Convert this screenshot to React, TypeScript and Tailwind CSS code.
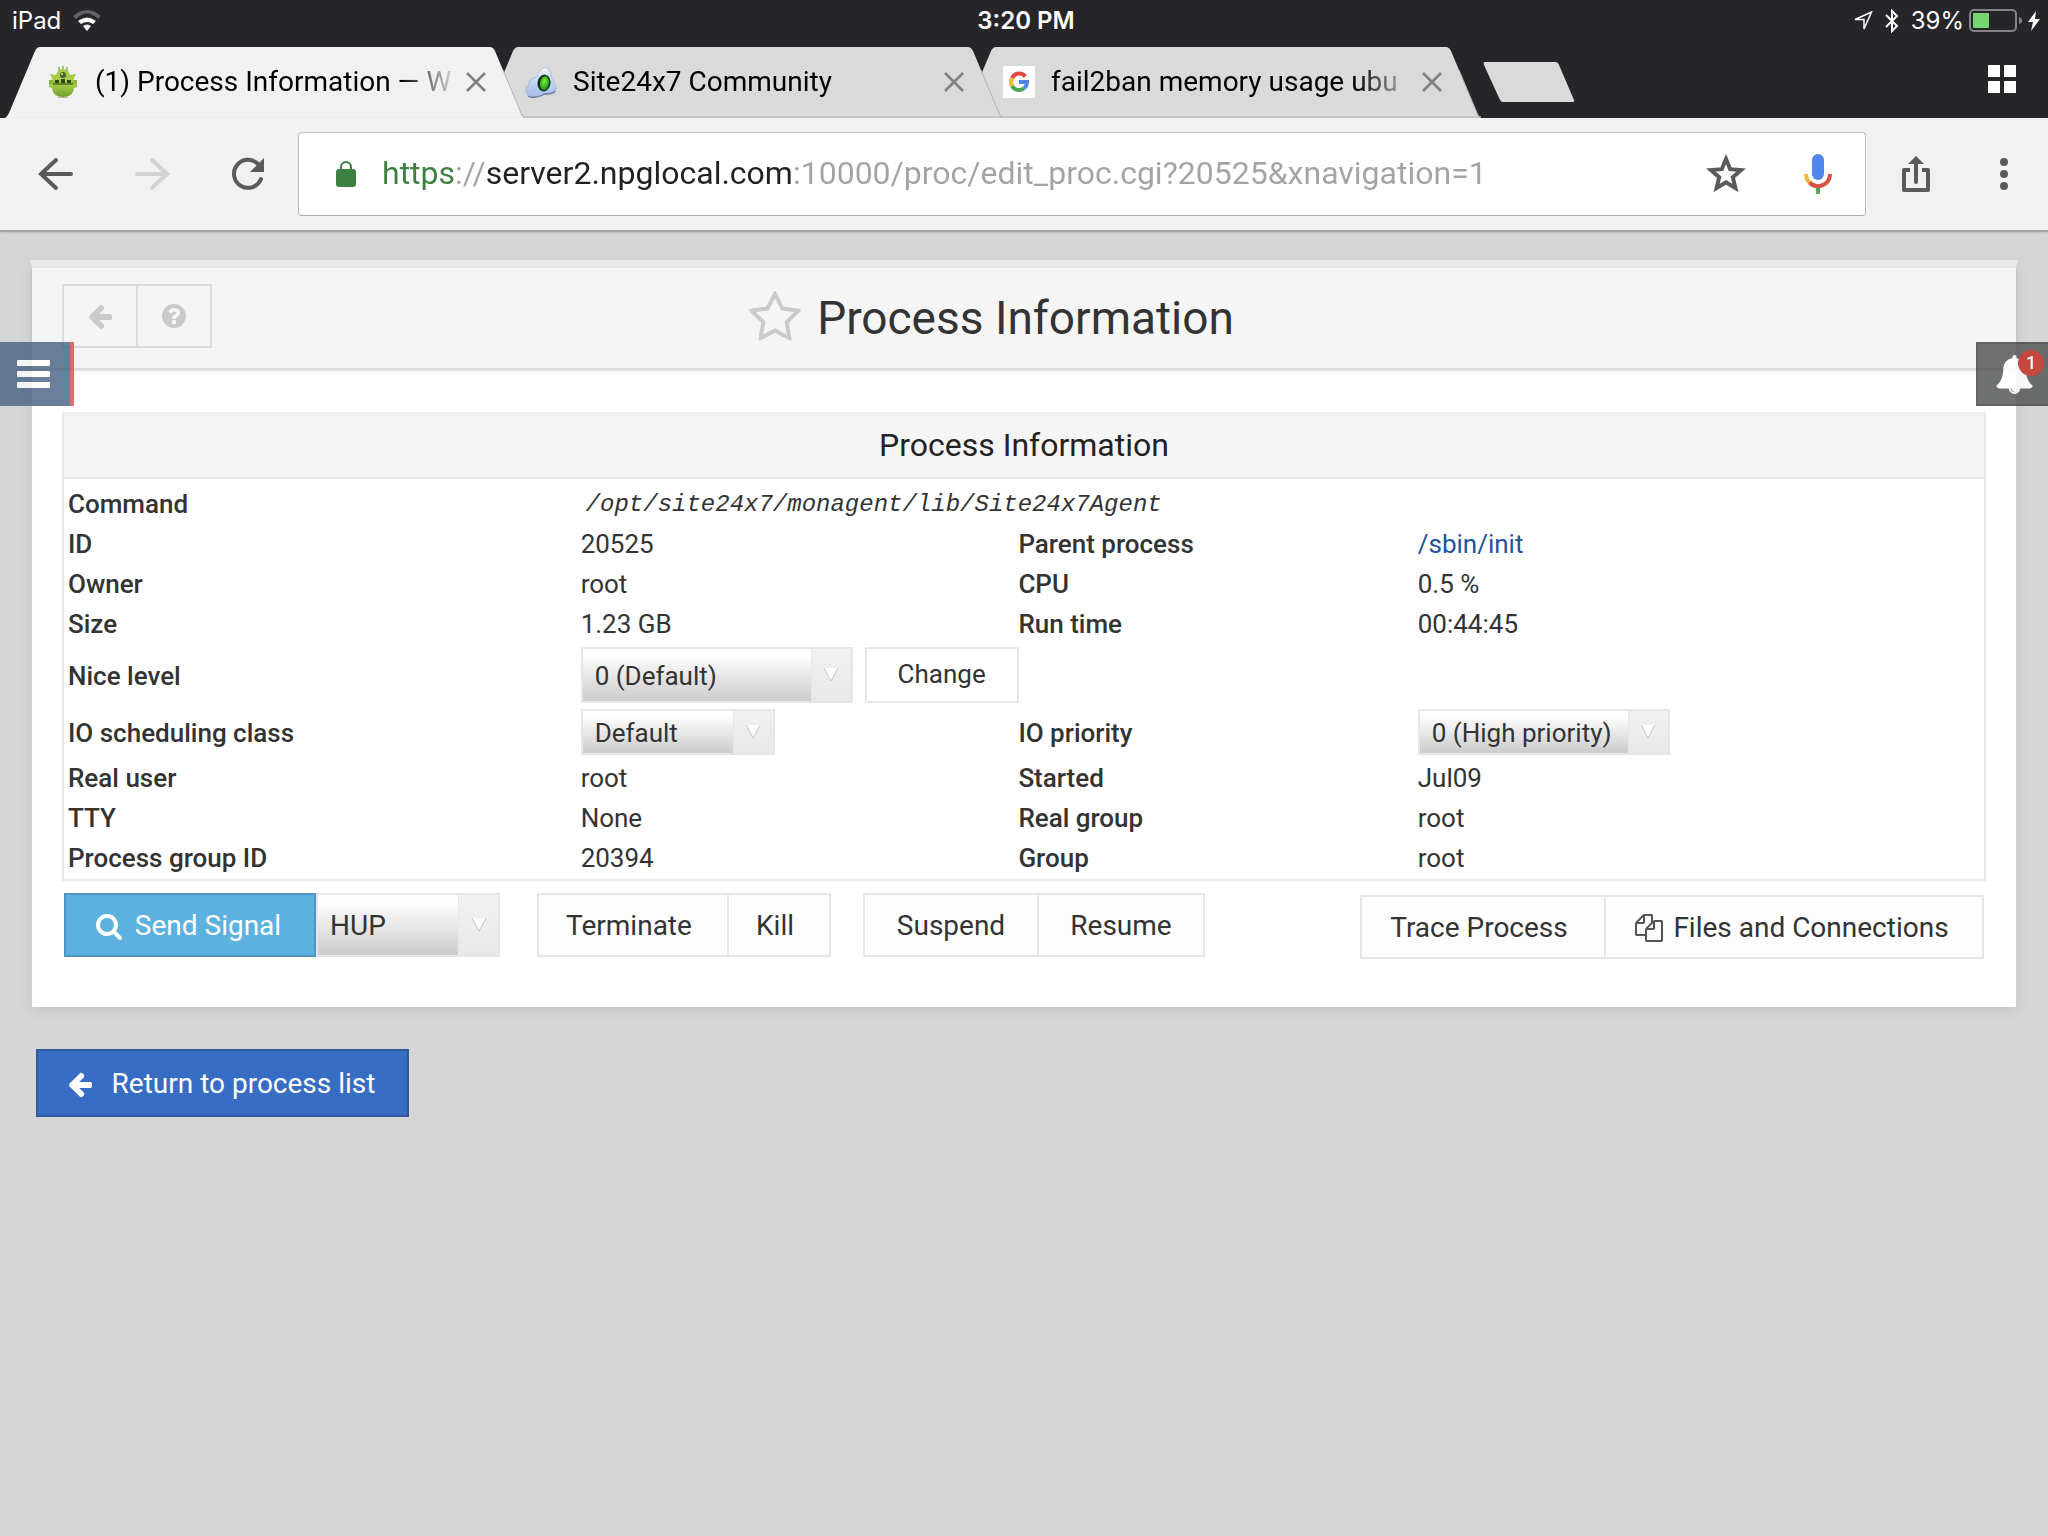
import { useState } from "react";

const paths = {
  arrowLeft:
    "M1664 896v128q0 53-32.5 90.5t-84.5 37.5h-704l293 294q38 36 38 90t-38 90l-75 76q-37 37-90 37-52 0-91-37l-651-652q-37-37-37-90 0-52 37-91l651-650q38-38 91-38 52 0 90 38l75 74q38 38 38 91t-38 91l-293 293h704q52 0 84.5 37.5t32.5 90.5z",
  question:
    "M1024 1376v-192q0-14-9-23t-23-9h-192q-14 0-23 9t-9 23v192q0 14 9 23t23 9h192q14 0 23-9t9-23zm256-672q0-88-55.5-163t-138.5-116-170-41q-243 0-371 213-15 24 8 42l132 100q7 6 19 6 16 0 25-12 53-68 86-92 34-24 86-24 48 0 85.5 26t37.5 59q0 38-20 61t-68 45q-63 28-115.5 86.5t-52.5 125.5v36q0 14 9 23t23 9h192q14 0 23-9t9-23q0-19 21.5-49.5t54.5-49.5q32-18 49-28.5t46-35 44.5-48 28-60.5 12.5-81zm384 192q0 209-103 385.5t-279.5 279.5-385.5 103-385.5-103-279.5-279.5-103-385.5 103-385.5 279.5-279.5 385.5-103 385.5 103 279.5 279.5 103 385.5z",
  star: "M1201 1004l306-297-422-62-189-382-189 382-422 62 306 297-73 421 378-199 377 199zm527-357q0 22-26 48l-363 354 86 500q1 7 1 20 0 50-41 50-19 0-40-12l-449-236-449 236q-22 12-40 12-21 0-31.5-14.5t-10.5-35.5q0-6 2-20l86-500-364-354q-25-27-25-48 0-37 56-46l502-73 225-455q19-41 49-41t49 41l225 455 502 73q56 9 56 46z",
  search:
    "M1216 832q0-185-131.5-316.5t-316.5-131.5-316.5 131.5-131.5 316.5 131.5 316.5 316.5 131.5 316.5-131.5 131.5-316.5zm512 832q0 52-38 90t-90 38q-54 0-90-38l-343-342q-179 124-399 124-143 0-273.5-55.5t-225-150-150-225-55.5-273.5 55.5-273.5 150-225 225-150 273.5-55.5 273.5 55.5 225 150 150 225 55.5 273.5q0 220-124 399l343 343q37 37 37 90z",
  files:
    "M1696 384q40 0 68 28t28 68v1216q0 40-28 68t-68 28h-960q-40 0-68-28t-28-68v-288h-544q-40 0-68-28t-28-68v-672q0-40 20-88t48-76l408-408q28-28 76-48t88-20h416q40 0 68 28t28 68v328q68-40 128-40h416zm-544 213l-299 299h299v-299zm-640-384l-299 299h299v-299zm196 647l316-316v-416h-384v416q0 40-28 68t-68 28h-416v640h512v-256q0-40 20-88t48-76zm956 804v-1152h-384v416q0 40-28 68t-68 28h-416v640h896z",
  bell: "M912 1696q0-16-16-16-59 0-101.5-42.5t-42.5-101.5q0-16-16-16t-16 16q0 73 51.5 124.5t124.5 51.5q16 0 16-16zm816-288q0 52-38 90t-90 38h-448q0 106-75 181t-181 75-181-75-75-181h-448q-52 0-90-38t-38-90q50-42 91-88t85-119.5 74.5-158.5 50-206 19.5-260q0-152 117-282.5t307-158.5q-8-19-8-39 0-40 28-68t68-28 68 28 28 68q0 20-8 39 190 28 307 158.5t117 282.5q0 139 19.5 260t50 206 74.5 158.5 85 119.5 91 88z",
};

function Icon({ name, className }: { name: keyof typeof paths; className: string }) {
  return (
    <svg viewBox="0 0 1792 1792" fill="currentColor" className={className} aria-hidden="true">
      <path d={paths[name]} />
    </svg>
  );
}

function WebminIcon() {
  return (
    <svg viewBox="0 0 32 32" className="h-8 w-8 shrink-0" aria-hidden="true">
      <defs>
        <linearGradient id="bowl" x1="0" y1="0" x2="0" y2="1">
          <stop offset="0" stopColor="#a6cf4c" />
          <stop offset="1" stopColor="#6f9e2a" />
        </linearGradient>
      </defs>
      <path d="M12 1v5M20 1v5M16 0v5" stroke="#a9c178" strokeWidth="2" />
      <path d="M3 8l6 1q2-6 7-6t7 6l6-1-3 6H6z" fill="#a3cb45" />
      <path d="M2 14h28v4H2z" fill="#8db53c" />
      <path d="M5 12h22l-2 5H7z" fill="#a3cb45" />
      <path d="M2 18h28v3l-3 1q-1 9-11 9T5 22l-3-1z" fill="url(#bowl)" />
      <path d="M6 17h20v2H6z" fill="#5f8327" />
      <circle cx="16" cy="9" r="3" fill="#4e6325" />
      <circle cx="15" cy="8" r="1" fill="#dbe8b8" />
      <path d="M8 14h4v3H8zM14 13h4v4h-4zM20 14h4v3h-4z" fill="#33451b" />
      <path d="M11 31h10v1H11z" fill="#b5bda6" />
    </svg>
  );
}

function CloudIcon() {
  return (
    <svg viewBox="0 0 32 32" className="h-8 w-8 shrink-0" aria-hidden="true">
      <defs>
        <linearGradient id="cloud" x1="0" y1="0" x2="0" y2="1">
          <stop offset="0" stopColor="#f4f8ff" />
          <stop offset=".5" stopColor="#c3d4f2" />
          <stop offset="1" stopColor="#a3bbe4" />
        </linearGradient>
        <radialGradient id="globe" cx=".45" cy=".4" r=".6">
          <stop offset="0" stopColor="#7df03f" />
          <stop offset="1" stopColor="#1f9412" />
        </radialGradient>
      </defs>
      <path
        d="M4 31q-4-3-3-8 0-3 3-4 0-6 5-7 2-1 3-1 1-6 4-7 4-5 8 0 3 2 2 6 3 3 3 7 4 5 1 9-4 2-10 2-6 3-16 3z"
        fill="url(#cloud)"
        stroke="#a9bbdc"
      />
      <path d="M3 30q3 2 8 1 6-1 9-3 8 0 10-3" stroke="#67809f" strokeWidth="1.5" fill="none" />
      <ellipse cx="19" cy="17" rx="6.5" ry="8.5" transform="rotate(10 19 17)" fill="#12331c" />
      <ellipse cx="19.5" cy="17" rx="4.5" ry="7" transform="rotate(10 19 17)" fill="url(#globe)" />
    </svg>
  );
}

function GoogleIcon() {
  return (
    <svg viewBox="0 0 32 32" className="h-8 w-8 shrink-0" aria-hidden="true">
      <rect width="32" height="32" fill="#fff" />
      <g fill="none" strokeWidth="4">
        <path d="M22.4 10.4A8 8 0 0 0 9.1 12" stroke="#dd4b3e" />
        <path d="M9.1 12a8 8 0 0 0 0 8" stroke="#f2b632" />
        <path d="M9.1 20a8 8 0 0 0 12 2.2" stroke="#4ca653" />
        <path d="M21.1 22.2A8 8 0 0 0 24 16h-8" stroke="#4f84ec" />
      </g>
    </svg>
  );
}

const tabs = [
  { title: "(1) Process Information — W", icon: <WebminIcon />, active: true },
  { title: "Site24x7 Community", icon: <CloudIcon />, active: false },
  { title: "fail2ban memory usage ubu", icon: <GoogleIcon />, active: false },
];

function BrowserTab({
  title,
  icon,
  active,
  order,
}: {
  title: string;
  icon: React.ReactNode;
  active: boolean;
  order: number;
}) {
  return (
    // every tab lies over the one to its right
    <li
      className="relative -mr-[42px] flex h-[71px] w-[520px] items-center pb-0.5 pl-[42px] pr-[39px]"
      style={{ zIndex: order }}
    >
      <svg
        viewBox="0 0 520 71"
        preserveAspectRatio="none"
        className="absolute inset-0 h-full w-full"
        aria-hidden="true"
      >
        <path
          d="M0 71q2-1 4-5L30 4q2-4 5-4h450q3 0 5 4l26 62q1 4 4 5z"
          fill={active ? "#f1f1f1" : "#dadada"}
        />
        <path
          d={active ? "M498 23l18 43q1 4 4 5" : "M498 23l18 43q1 4 4 4H38"}
          fill="none"
          stroke="#b4b4b4"
          strokeWidth="1"
        />
      </svg>
      <button className="relative flex min-w-0 flex-1 items-center gap-4 text-left">
        {icon}
        <span className="min-w-0 flex-1 overflow-hidden whitespace-nowrap bg-linear-to-r from-black from-85% to-black/10 bg-clip-text text-[28px] leading-10 text-transparent">
          {title}
        </span>
      </button>
      <button className="relative ml-3" aria-label="Close tab">
        <svg viewBox="0 0 20 20" className="h-5 w-5" stroke="#808080" strokeWidth="2.5">
          <path d="M1 1l18 18M19 1 1 19" />
        </svg>
      </button>
    </li>
  );
}

function StatusBar() {
  return (
    <div className="grid h-[47px] grid-cols-3 items-center pb-1.5 pl-3 pr-2 font-[Inter,sans-serif] text-2xl text-white">
      <div className="flex items-center gap-3">
        <span>iPad</span>
        <svg viewBox="0 0 28 21" className="h-[21px] w-7" aria-hidden="true">
          <path d="M0 6Q14-6 28 6l-3 3Q14-2 3 9z" fill="#626266" />
          <path d="M5 11q9-7 18 0l-3 3q-6-4-12 0zM10 16q4-3 8 0l-4 5z" fill="#fff" />
        </svg>
      </div>
      <div className="text-center font-semibold">3:20 PM</div>
      <div className="flex items-center justify-end gap-3">
        <svg viewBox="0 0 20 20" className="h-5 w-5" fill="none" stroke="#fff" strokeWidth="1.5" aria-hidden="true">
          <path d="M18.5 1 11 18V8.5H2z" />
        </svg>
        <svg viewBox="0 0 14 24" className="h-6 w-[14px]" fill="none" stroke="#fff" strokeWidth="2" aria-hidden="true">
          <path d="M1 6l11 11-5 5V2l5 5L1 18" />
        </svg>
        <div className="flex items-center gap-[5px]">
          <span>39%</span>
          <svg viewBox="0 0 54 24" className="h-6 w-[54px]" aria-hidden="true">
            <rect x="1" y="1" width="46" height="21" rx="4" fill="none" stroke="#838387" strokeWidth="2" />
            <rect x="4" y="4" width="16" height="15" rx="1" fill="#76d672" />
            <path d="M50 8q3 1 3 3.5T50 15z" fill="#838387" />
          </svg>
          <svg viewBox="0 0 12 20" className="h-5 w-3" fill="#fff" aria-hidden="true">
            <path d="M8 0 0 11h5l-2 9 9-12H7z" />
          </svg>
        </div>
      </div>
    </div>
  );
}

function Toolbar() {
  const [url, setUrl] = useState(
    "https://server2.npglocal.com:10000/proc/edit_proc.cgi?20525&xnavigation=1"
  );

  return (
    <div className="relative flex h-[114px] items-center border-b-2 border-[#a4a4a4] bg-[#f1f1f1] pb-px pl-9 pr-6 text-[#5a5a5a] shadow-sm">
      <div className="flex gap-14">
        <button aria-label="Back">
          <svg viewBox="0 0 40 40" className="h-10 w-10" fill="none" stroke="currentColor" strokeWidth="4" strokeLinecap="round">
            <path d="M35 20H5M20 6 5 20l15 14" />
          </svg>
        </button>
        <button aria-label="Forward" className="text-[#d2d2d2]">
          <svg viewBox="0 0 40 40" className="h-10 w-10" fill="none" stroke="currentColor" strokeWidth="4" strokeLinecap="round">
            <path d="M5 20h30M20 6l15 14-15 14" />
          </svg>
        </button>
        <button aria-label="Reload">
          <svg viewBox="0 0 40 40" className="h-10 w-10">
            <path
              d="M33 25A14 14 0 1 1 30 10"
              fill="none"
              stroke="currentColor"
              strokeWidth="4"
              strokeLinecap="round"
            />
            <path d="M36 4v14H22z" fill="currentColor" />
          </svg>
        </button>
      </div>
      <div className="ml-[30px] flex h-[84px] min-w-0 flex-1 items-center rounded border border-[#bcbcbc] border-b-[#a8a8a8] bg-white pl-[37px] pr-[29px]">
        <svg viewBox="0 0 20 26" className="h-[26px] w-5 shrink-0" aria-hidden="true">
          <path d="M5 11V6a5 5 0 0 1 10 0v5" fill="none" stroke="#3c7f41" strokeWidth="2" />
          <rect y="8" width="20" height="18" rx="3" fill="#3c7f41" />
        </svg>
        <input
          type="text"
          aria-label="Address"
          value={url}
          onChange={(e) => setUrl(e.target.value)}
          className="ml-[26px] min-w-0 flex-1 bg-[linear-gradient(to_right,#3c7f41_72px,#a3a3a3_72px,#a3a3a3_104px,#212121_104px,#212121_410px,#a3a3a3_410px)] bg-clip-text pb-0.5 text-[32px] leading-10 text-transparent outline-none"
        />
        <button aria-label="Bookmark">
          <svg viewBox="0 0 40 40" className="h-10 w-10" fill="none" stroke="currentColor" strokeWidth="4">
            <path d="M20 5l4.2 10.2 11 .9-8.4 7.2 2.6 10.700L20 28.300 10.600 34l2.600-10.700-8.400-7.200 11-.9z" />
          </svg>
        </button>
        <button aria-label="Voice search" className="ml-[54px]">
          <svg viewBox="0 0 36 40" className="h-10 w-9" fill="none" strokeWidth="4">
            <rect x="12" width="12" height="26" rx="6" fill="#5186ec" />
            <path d="M6 20a12 12 0 0 0 4 9" stroke="#ecb93c" />
            <path d="M9.5 28.5A12 12 0 0 0 30 20" stroke="#d95040" />
            <path d="M18 34v6" stroke="#58a55c" />
          </svg>
        </button>
      </div>
      <button aria-label="Share" className="ml-[30px]">
        <svg viewBox="0 0 40 40" className="h-10 w-10" fill="none" stroke="currentColor" strokeWidth="4">
          <path d="M14 16H8v20h24V16h-6" strokeLinejoin="round" />
          <path d="M20 28V8" strokeLinecap="round" />
          <path d="M20 2l8 8H12z" fill="currentColor" stroke="none" />
        </svg>
      </button>
      <button aria-label="Menu" className="ml-12">
        <svg viewBox="0 0 40 40" className="h-10 w-10" fill="currentColor">
          <circle cx="20" cy="8" r="4" />
          <circle cx="20" cy="20" r="4" />
          <circle cx="20" cy="32" r="4" />
        </svg>
      </button>
    </div>
  );
}

function Select({ id, label, value, className }: { id: string; label?: string; value: string; className: string }) {
  return (
    <div className={`relative ${className}`}>
      <select
        id={id}
        aria-label={label}
        className="h-full w-full appearance-none border-2 border-[#e6e6e6] bg-linear-to-b from-white from-10% to-[#cccccc] pl-3 pr-10 pt-0.5 outline-none"
      >
        <option>{value}</option>
      </select>
      <span className="pointer-events-none absolute inset-y-0 right-0 flex w-[42px] items-center justify-center border-2 border-l border-[#e6e6e6] bg-linear-to-b from-[#f1f1f1] to-[#e8e8e8]">
        <svg viewBox="0 0 16 16" className="h-4 w-4" aria-hidden="true">
          <path d="M1 1h14L8 14z" fill="#fff" />
          <path d="M1 1l7 13 7-13" fill="none" stroke="#c4c4c4" />
        </svg>
      </span>
    </div>
  );
}

const th = "px-1 text-left font-medium";
const td = "px-1 text-left";

function ProcessTable() {
  return (
    <section className="border-2 border-t-4 border-[#e8e8e8] border-t-[#efefef]">
      <h2 className="border-b-2 border-[#e8e8e8] bg-[#f5f5f5] pb-3 pt-[9px] text-center text-[32px] leading-10 text-[#222]">
        Process Information
      </h2>
      <div className="pb-px pt-[5px]">
        <table className="w-full table-fixed border-collapse text-[26px] leading-10">
          <colgroup>
            <col className="w-[26.7%]" />
            <col className="w-[22.8%]" />
            <col className="w-[20.8%]" />
            <col />
          </colgroup>
          <tbody>
            <tr className="h-10">
              <th className={th}>Command</th>
              <td className={td} colSpan={3}>
                <code className="block pl-[5px] pt-0.5 font-['Liberation_Mono',monospace] text-2xl leading-[38px] italic">
                  /opt/site24x7/monagent/lib/Site24x7Agent
                </code>
              </td>
            </tr>
            <tr className="h-10">
              <th className={th}>ID</th>
              <td className={td}>20525</td>
              <th className={th}>Parent process</th>
              <td className={td}>
                <a href="#init" className="text-[#23539a]">
                  /sbin/init
                </a>
              </td>
            </tr>
            <tr className="h-10">
              <th className={th}>Owner</th>
              <td className={td}>root</td>
              <th className={th}>CPU</th>
              <td className={td}>0.5 %</td>
            </tr>
            <tr className="h-10">
              <th className={th}>Size</th>
              <td className={td}>1.23 GB</td>
              <th className={th}>Run time</th>
              <td className={td}>00:44:45</td>
            </tr>
            <tr className="h-[62px]">
              <th className={`pt-0.5 ${th}`}>
                <label htmlFor="nice">Nice level</label>
              </th>
              <td className={td} colSpan={3}>
                <div className="flex gap-3">
                  <Select id="nice" value="0 (Default)" className="h-14 w-[272px]" />
                  <button className="h-14 w-[154px] border-2 border-[#e6e6e6] bg-white pb-0.5">Change</button>
                </div>
              </td>
            </tr>
            <tr className="h-[52px]">
              <th className={`pt-0.5 ${th}`}>
                <label htmlFor="ioclass">IO scheduling class</label>
              </th>
              <td className={td}>
                <Select id="ioclass" value="Default" className="h-[46px] w-[194px]" />
              </td>
              <th className={`pt-0.5 ${th}`}>
                <label htmlFor="ioprio">IO priority</label>
              </th>
              <td className={td}>
                <Select id="ioprio" value="0 (High priority)" className="h-[46px] w-[252px]" />
              </td>
            </tr>
            <tr className="h-10">
              <th className={th}>Real user</th>
              <td className={td}>root</td>
              <th className={th}>Started</th>
              <td className={td}>Jul09</td>
            </tr>
            <tr className="h-10">
              <th className={th}>TTY</th>
              <td className={td}>None</td>
              <th className={th}>Real group</th>
              <td className={td}>root</td>
            </tr>
            <tr className="h-10">
              <th className={th}>Process group ID</th>
              <td className={td}>20394</td>
              <th className={th}>Group</th>
              <td className={td}>root</td>
            </tr>
          </tbody>
        </table>
      </div>
    </section>
  );
}

const btn = "h-16 border-2 border-[#e6e6e6] bg-[#fdfdfd]";

export default function App() {
  return (
    <div className="relative min-h-screen bg-[#d6d6d6] font-[Roboto,sans-serif] text-[#333]">
      <header className="bg-[#26252a]">
        <StatusBar />
        <div className="flex items-start justify-between pl-[5px] pr-8">
          <ul className="isolate flex">
            {tabs.map((tab, i) => (
              <BrowserTab key={tab.title} {...tab} order={tabs.length - i} />
            ))}
            <li className="ml-11 mt-[15px]">
              <button aria-label="New tab">
                <svg viewBox="0 0 92 40" className="block h-10 w-[92px]">
                  <path d="M2 0h70q3 0 4 3l15 35q1 2-2 2H20q-2 0-3-2L1 3q-1-3 1-3z" fill="#dadada" />
                </svg>
              </button>
            </li>
          </ul>
          <button aria-label="Show tabs" className="mt-[18px] grid grid-cols-2 gap-1">
            <span className="h-3 w-3 bg-white" />
            <span className="h-3 w-3 bg-white" />
            <span className="h-3 w-3 bg-white" />
            <span className="h-3 w-3 bg-white" />
          </button>
        </div>
        <Toolbar />
      </header>

      <main className="pt-7">
        <div className="mx-[30px] border-x-2 border-t-8 border-[#cfcfcf] border-t-[#e8e8e8] bg-white shadow-[0_4px_12px_rgba(0,0,0,0.08)]">
          <div className="flex h-[102px] items-start border-b-2 border-[#dcdcdc] bg-[#f5f5f5] px-[30px] pt-4 shadow-sm">
            <div className="flex text-[#cacaca]">
              <button aria-label="Go back" className="flex h-16 w-[76px] items-center justify-center border-2 border-[#dcdcdc]">
                <Icon name="arrowLeft" className="h-7 w-7" />
              </button>
              <button aria-label="Help" className="-ml-0.5 flex h-16 w-[76px] items-center justify-center border-2 border-[#dcdcdc]">
                <Icon name="question" className="h-7 w-7" />
              </button>
            </div>
            <div className="flex flex-1 items-center justify-center gap-3.5 pr-[217px]">
              <button aria-label="Add to favorites" className="text-[#cacaca]">
                <Icon name="star" className="block h-14 w-14" />
              </button>
              <h1 className="text-[46px] leading-[68px]">Process Information</h1>
            </div>
          </div>

          <div className="px-[30px] pb-12 pt-[42px]">
            <ProcessTable />
            <div className="mt-3 flex justify-between px-0.5 text-[28px]">
              <div className="flex">
                <button className="flex h-16 w-[252px] items-center justify-center gap-3 border-2 border-[#5096c4] bg-[#5db1df] pr-1 pt-0.5 text-white">
                  <Icon name="search" className="h-7 w-7" />
                  Send Signal
                </button>
                <Select id="signal" label="Signal" value="HUP" className="h-16 w-[184px]" />
                <button className={`ml-[37px] w-[192px] pr-2 pt-0.5 ${btn}`}>Terminate</button>
                <button className={`-ml-0.5 w-[104px] pr-2 pt-0.5 ${btn}`}>Kill</button>
                <button className={`ml-8 w-44 pt-0.5 ${btn}`}>Suspend</button>
                <button className={`-ml-0.5 w-[168px] pt-0.5 ${btn}`}>Resume</button>
              </div>
              <div className="flex pt-0.5">
                <button className={`w-[246px] pr-2 pt-0.5 ${btn}`}>Trace Process</button>
                <button className={`-ml-0.5 flex w-[380px] items-center justify-center gap-2.5 pr-1 pt-0.5 ${btn}`}>
                  <Icon name="files" className="h-7 w-7 text-[#555]" />
                  Files and Connections
                </button>
              </div>
            </div>
          </div>
        </div>

        <a
          href="#list"
          className="ml-9 mt-[42px] inline-flex h-[68px] w-[373px] items-center justify-center gap-[18px] border-2 border-[#2f5b9b] bg-[#386dc4] pr-1 pt-0.5 text-[28px] text-white"
        >
          <Icon name="arrowLeft" className="h-7 w-7" />
          Return to process list
        </a>
      </main>

      <button
        aria-label="Open navigation"
        className="absolute left-0 top-[342px] flex h-16 w-[74px] items-center border-r-4 border-[#d84c44] bg-[#466082] pl-[17px] opacity-80"
      >
        <svg viewBox="0 0 33 28" className="h-7 w-[33px]" fill="#fff">
          <rect width="33" height="6" rx="1" />
          <rect y="11" width="33" height="6" rx="1" />
          <rect y="22" width="33" height="6" rx="1" />
        </svg>
      </button>
      <button
        aria-label="Notifications"
        className="absolute right-0 top-[342px] flex h-16 w-[72px] items-center border-2 border-r-0 border-[#454545] bg-[#545655] pl-[17px] text-white opacity-[.83]"
      >
        <Icon name="bell" className="h-[39px] w-[39px]" />
        <span className="absolute right-1 top-1.5 flex h-[26px] w-[26px] items-center justify-center rounded-full bg-[#c22d21] text-lg leading-none font-medium">
          1
        </span>
      </button>
    </div>
  );
}
